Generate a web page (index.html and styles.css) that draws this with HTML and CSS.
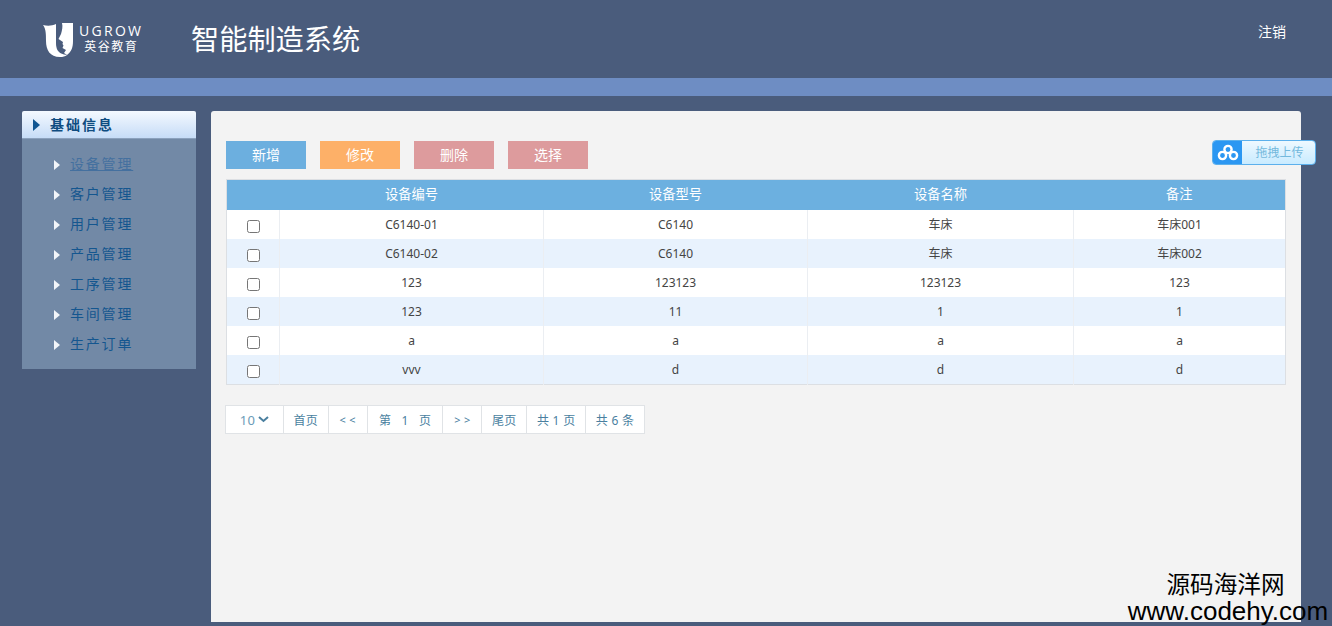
FILE: index.html
```html
<!DOCTYPE html>
<html lang="zh-CN">
<head>
<meta charset="utf-8">
<title>智能制造系统</title>
<link rel="stylesheet" href="styles.css">
</head>
<body>
<header class="top">
  <div class="logo">
    <svg class="logo-mark" width="30" height="34" viewBox="0 0 30 34">
      <path class="logo-white" d="M0 2 C4 3 9 3 13 1 L13 20 C13 26 15 30 21 31.500 L24 32 C22 33.500 20 34 17 34 C7 34 3 27 3 18 C3 11 3 6 0 2 Z"/>
      <path class="logo-white" d="M19 0 L30 0 L30 18 C30 25 28 29 24 32 L21 30 L23 27 L19.500 25 L20.500 22.500 L19.500 21 L20 19 L15.500 16 L18 11 C19 7 20 4 19 0 Z"/>
    </svg>
    <div class="logo-text">
      <div class="logo-en">UGROW</div>
      <div class="logo-cn">英谷教育</div>
    </div>
  </div>
  <h1 class="sys-title">智能制造系统</h1>
  <a class="logout">注销</a>
</header>
<div class="strip"></div>
<main class="body">
  <aside class="side">
    <div class="side-head"><span class="tri tri-dark"></span><span class="head-text">基础信息</span></div>
    <ul class="side-list">
      <li class="side-item"><span class="tri tri-white"></span><a class="side-link current">设备管理</a></li>
      <li class="side-item"><span class="tri tri-white"></span><a class="side-link">客户管理</a></li>
      <li class="side-item"><span class="tri tri-white"></span><a class="side-link">用户管理</a></li>
      <li class="side-item"><span class="tri tri-white"></span><a class="side-link">产品管理</a></li>
      <li class="side-item"><span class="tri tri-white"></span><a class="side-link">工序管理</a></li>
      <li class="side-item"><span class="tri tri-white"></span><a class="side-link">车间管理</a></li>
      <li class="side-item"><span class="tri tri-white"></span><a class="side-link">生产订单</a></li>
    </ul>
  </aside>
  <section class="panel">
    <div class="tools">
      <button class="btn btn-blue">新增</button>
      <button class="btn btn-orange">修改</button>
      <button class="btn btn-red">删除</button>
      <button class="btn btn-red">选择</button>
    </div>
    <div class="upload">
      <span class="upload-icon">
        <svg width="22" height="18" viewBox="0 0 22 18">
          <circle class="ring" cx="11" cy="5.500" r="3.600"/>
          <circle class="ring" cx="5.500" cy="11.500" r="3.600"/>
          <circle class="ring" cx="16.500" cy="11.500" r="3.600"/>
        </svg>
      </span>
      <span class="upload-text">拖拽上传</span>
    </div>
    <table class="grid">
      <colgroup>
        <col class="c0"><col class="c1"><col class="c2"><col class="c3"><col class="c4">
      </colgroup>
      <thead>
        <tr><th></th><th>设备编号</th><th>设备型号</th><th>设备名称</th><th>备注</th></tr>
      </thead>
      <tbody>
        <tr><td><input type="checkbox"></td><td>C6140-01</td><td>C6140</td><td>车床</td><td>车床001</td></tr>
        <tr><td><input type="checkbox"></td><td>C6140-02</td><td>C6140</td><td>车床</td><td>车床002</td></tr>
        <tr><td><input type="checkbox"></td><td>123</td><td>123123</td><td>123123</td><td>123</td></tr>
        <tr><td><input type="checkbox"></td><td>123</td><td>11</td><td>1</td><td>1</td></tr>
        <tr><td><input type="checkbox"></td><td>a</td><td>a</td><td>a</td><td>a</td></tr>
        <tr class="row-last"><td><input type="checkbox"></td><td>vvv</td><td>d</td><td>d</td><td>d</td></tr>
      </tbody>
    </table>
    <nav class="pager">
      <span class="pg pg-size">10<svg class="chev" width="11" height="7" viewBox="0 0 11 7"><path d="M1 1 L5.500 5 L10 1"/></svg></span>
      <span class="pg pg-a">首页</span>
      <span class="pg pg-b">&lt; &lt;</span>
      <span class="pg pg-c">第&nbsp;&nbsp;&nbsp;1&nbsp;&nbsp;&nbsp;页</span>
      <span class="pg pg-b">&gt; &gt;</span>
      <span class="pg pg-a">尾页</span>
      <span class="pg pg-d">共 1 页</span>
      <span class="pg pg-e">共 6 条</span>
    </nav>
  </section>
</main>
<div class="mark"><div class="mark-cn">源码海洋网</div><div class="mark-en">www.codehy.com</div></div>
</body>
</html>
```
FILE: styles.css
```css
* { box-sizing: border-box; }
html, body { margin: 0; padding: 0; height: 626px; overflow: hidden; }
body {
  background: #4a5c7c;
  font-family: "Noto Sans", "Noto Sans CJK SC", sans-serif;
  font-size: 12px;
  color: #333;
  position: relative;
}
.top { height: 78px; display: flex; align-items: center; padding: 0 46px 0 43px; }
.logo { display: flex; align-items: center; width: 148px; padding-top: 2px; }
.logo-white { fill: #fff; }
.logo-text { margin-left: 6px; color: #fff; text-align: center; margin-top: -3px; }
.logo-en { font-size: 14px; letter-spacing: 2.300px; line-height: 16px; font-family: "Open Sans", sans-serif; }
.logo-cn { font-size: 12px; letter-spacing: 1.500px; line-height: 15px; }
.sys-title { margin: 0; font-size: 28.200px; font-weight: 400; color: #fff; line-height: 40px; }
.logout { margin-left: auto; color: #fff; font-size: 14px; margin-top: -16px; }
.strip { height: 18px; background: #6e8dc3; }
.body { display: flex; align-items: flex-start; padding: 15px 0 0 22px; gap: 15px; }
.side { width: 174px; }
.side-head {
  height: 28px;
  display: flex;
  align-items: center;
  font-size: 14px;
  font-weight: 700;
  letter-spacing: 2px;
  color: #0f4c81;
  background: linear-gradient(#f4f9ff, #c6dcf7);
  border-bottom: 1px solid #8ba1bd;
  border-radius: 2px 2px 0 0;
  padding-left: 11px;
}
.head-text { margin-top: -2px; }
.tri { width: 0; height: 0; border-style: solid; border-color: transparent; border-width: 6px 0 6px 7px; }
.tri-dark { border-left-color: #0f5592; margin-right: 10px; }
.tri-white { border-width: 5px 0 5px 6px; border-left-color: #f2f5f9; margin-right: 10px; }
.side-list { margin: 0; padding: 11px 0 9px 32px; list-style: none; background: #7289a6; }
.side-item { height: 30px; display: flex; align-items: center; }
.side-link { font-size: 14px; letter-spacing: 1.800px; color: #14568f; margin-top: -4px; }
.side-link.current { color: #44709f; text-decoration: underline; }
.panel {
  width: 1090px;
  height: 511px;
  background: #f3f3f3;
  border-radius: 3px 3px 0 0;
  padding: 30px 0 0 15px;
  position: relative;
}
.tools { display: flex; gap: 14px; }
.btn {
  width: 80px;
  height: 28px;
  border: 0;
  padding: 0 0 3px;
  color: #fff;
  font: 14px "Noto Sans", "Noto Sans CJK SC", sans-serif;
}
.btn-blue { background: #6cafdf; }
.btn-orange { background: #fdb068; }
.btn-red { background: #dd9b9d; }
.upload {
  position: absolute;
  left: 1001px;
  top: 29px;
  width: 104px;
  height: 25px;
  display: flex;
  border: 1px solid #5cb0ec;
  border-radius: 4px;
  overflow: hidden;
  background: linear-gradient(#eef9ff, #c9ebff);
}
.upload-icon { width: 29px; background: #2b97f2; display: flex; align-items: center; justify-content: center; }
.ring { fill: none; stroke: #fff; stroke-width: 2.400; }
.upload-text { flex: 1; text-align: center; font-size: 12px; line-height: 23px; color: #73b9dd; padding-left: 2px; }
.grid {
  margin-top: 10px;
  width: 1059px;
  table-layout: fixed;
  border-collapse: collapse;
  border: 1px solid #dcdfe3;
  background: #fff;
}
.c0 { width: 53px; }
.c1 { width: 264px; }
.c2 { width: 264px; }
.c3 { width: 266px; }
.c4 { width: 212px; }
.grid th {
  height: 30px;
  padding: 0 0 2px;
  background: #6cb0e0;
  color: #fff;
  font-size: 13.300px;
  font-weight: 400;
}
.grid td {
  height: 29px;
  padding: 1px 0 0;
  text-align: center;
  font-size: 12px;
  color: #444;
  border-left: 1px solid #ebeef2;
  line-height: 14px;
}
.grid .row-last td { height: 30px; }
.grid td:first-child { border-left: 0; }
.grid tbody tr:nth-child(even) td { background: #e8f2fd; }
.grid input { width: 13px; height: 13px; margin: 3px 0 0; vertical-align: middle; }
.pager { display: flex; margin: 20px 0 0 -1px; height: 29px; width: 420px; background: #fff; border: 1px solid #e0e3e6; }
.pg {
  display: flex;
  align-items: center;
  justify-content: center;
  border-left: 1px solid #e0e3e6;
  color: #4a7f9f;
  font-size: 12px;
  letter-spacing: .3px;
  white-space: nowrap;
}
.pg-size { width: 57px; border-left: 0; font-size: 13px; color: #6b9cb8; gap: 3px; }
.pg-a { width: 45px; }
.pg-b { width: 39px; font-size: 11px; }
.pg-c { width: 76px; }
.pg-d { width: 59px; }
.pg-e { width: 59px; }
.chev { fill: none; stroke: #4a7f9f; stroke-width: 2; }
.mark { position: absolute; right: 3px; top: 569px; width: 202px; text-align: center; color: #000; }
.mark-cn { font-size: 23.600px; line-height: 30px; padding-right: 5px; }
.mark-en { font-size: 26px; line-height: 25px; font-family: "Liberation Sans", sans-serif; }
```
